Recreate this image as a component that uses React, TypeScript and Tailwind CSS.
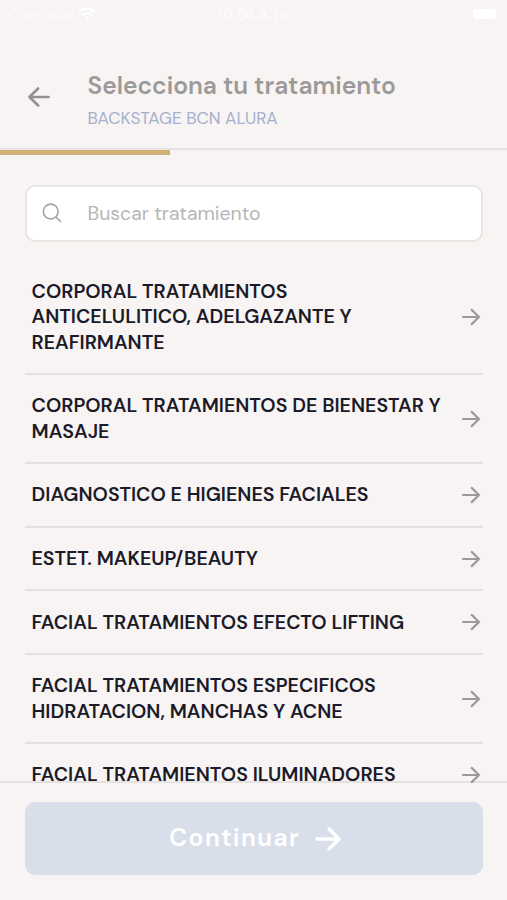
import React from 'react';

const treatments: string[][] = [
  ['CORPORAL TRATAMIENTOS', 'ANTICELULITICO, ADELGAZANTE Y', 'REAFIRMANTE'],
  ['CORPORAL TRATAMIENTOS DE BIENESTAR Y', 'MASAJE'],
  ['DIAGNOSTICO E HIGIENES FACIALES'],
  ['ESTET. MAKEUP/BEAUTY'],
  ['FACIAL TRATAMIENTOS EFECTO LIFTING'],
  ['FACIAL TRATAMIENTOS ESPECIFICOS', 'HIDRATACION, MANCHAS Y ACNE'],
  ['FACIAL TRATAMIENTOS ILUMINADORES'],
];

function Arrow({ className, weight = 2 }: { className: string; weight?: number }) {
  return (
    <svg viewBox="0 0 20 20" className={className} fill="none" stroke="currentColor" strokeWidth={weight} strokeLinecap="round" strokeLinejoin="round">
      <path d="M2 10H18M10.7 2.9L18 10L10.7 17.1" />
    </svg>
  );
}

export default function App() {
  return (
    <div className="flex h-[900px] w-[507px] flex-col overflow-hidden bg-[#f7f4f3] font-['DM_Sans','Inter',sans-serif] [font-optical-sizing:none]">
      <div className="flex h-[28px] shrink-0 items-center justify-between pr-[11px] pl-[8px] text-white">
        <div className="flex w-[200px] items-center gap-[3px]">
          <span className="font-['Inter',sans-serif] text-[15px] leading-none tracking-[-0.1px] opacity-60">Operador</span>
          <svg viewBox="0 0 18 14" className="h-[14px] w-[18px]" fill="none" stroke="currentColor" strokeWidth="2.2">
            <path d="M1 5Q9 -2 17 5M4 8.500Q9 4 14 8.500" />
            <path d="M7 11Q9 9 11 11L9 13Z" fill="currentColor" stroke="none" />
          </svg>
        </div>
        <span className="w-[90px] font-['Inter',sans-serif] text-[15px] leading-none font-medium tracking-[-0.3px] whitespace-nowrap opacity-70">10:56 a. m.</span>
        <div className="flex w-[180px] justify-end">
          <div className="h-[10px] w-[23px] rounded-[2px] bg-white" />
        </div>
      </div>

      <header className="flex h-[122px] shrink-0 items-start border-b-2 border-[#e6e3e2] pl-[27px]">
        <Arrow className="mt-[57px] h-[24px] w-[24px] rotate-180 text-[#929191]" weight={2.2} />
        <div className="ml-[36.500px] pt-[42px]">
          <h1 className="text-[24.550px] leading-[32px] font-semibold whitespace-nowrap text-[#9b9a99]">Selecciona tu tratamiento</h1>
          <p className="mt-[6px] text-[17.100px] leading-[20px] whitespace-nowrap text-[#a5b0cd]">BACKSTAGE BCN ALURA</p>
        </div>
      </header>
      <div className="z-10 -mt-[0.500px] h-[5px] w-[170px] shrink-0 bg-[#d2b177]" />

      <div className="mr-[24.500px] ml-[25px] mt-[30.500px] flex h-[56.500px] shrink-0 items-center rounded-[10px] border-2 border-[#e8e5e3] bg-white pl-[15px]">
        <svg viewBox="0 0 20 20" className="h-[20px] w-[20px] text-[#a2a2a2]" fill="none" stroke="currentColor" strokeWidth="1.6" strokeLinecap="round">
          <circle cx="8.700" cy="8.500" r="7.400" />
          <path d="M14 14L18.500 18.500" />
        </svg>
        <span className="ml-[25.500px] text-[19.450px] whitespace-nowrap text-[#b6b6b6]">Buscar tratamiento</span>
      </div>

      <main className="relative z-10 mt-[18.500px] h-[523px] shrink-0 overflow-hidden pr-[24.500px] pl-[25px]">
        {treatments.map((lines) => (
          <div key={lines[0]} className="flex items-center justify-between border-b-2 border-[#e3e0df] pt-[18.500px] pr-[2px] pb-[17.500px] pl-[6.500px]">
            <div className="text-[19.650px] leading-[25.6px] font-semibold whitespace-nowrap text-[#1b1a29]">
              {lines.map((line) => (
                <div key={line}>{line}</div>
              ))}
            </div>
            <Arrow className="h-[20px] w-[20px] text-[#9b9a9a]" weight={2.2} />
          </div>
        ))}
      </main>

      <footer className="-mt-[2px] flex-1 border-t-2 border-[#e4e1e0] pt-[19px] pr-[24.500px] pl-[25px]">
        <button className="flex h-[73px] w-full items-center justify-center rounded-[10px] bg-[#d9dfea] pl-[4px] text-white">
          <span className="text-[24.500px] font-semibold tracking-[1.5px]">Continuar</span>
          <Arrow className="ml-[14px] h-[28px] w-[28px]" weight={2.4} />
        </button>
      </footer>
    </div>
  );
}
